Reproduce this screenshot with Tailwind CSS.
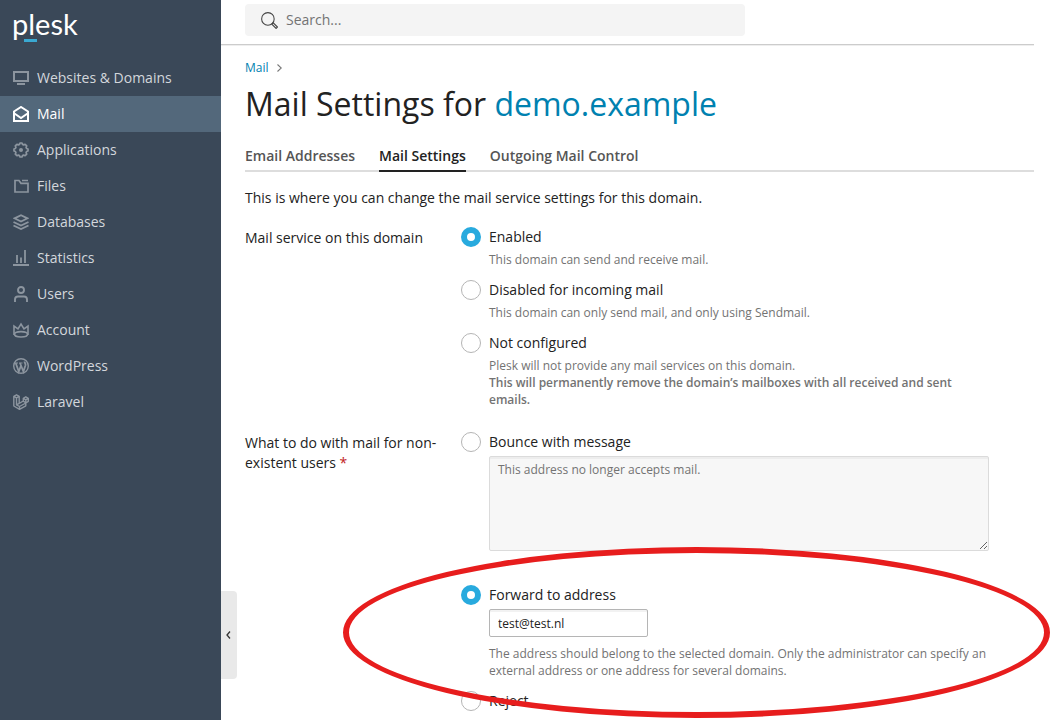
<!DOCTYPE html>
<html lang="en">
<head>
    <meta charset="UTF-8">
    <meta name="viewport" content="width=device-width, initial-scale=1.0">
    <title>Mail Settings for demo.example</title>
    <script src="https://cdn.jsdelivr.net/npm/@tailwindcss/browser@4"></script>
</head>
<body class="relative flex h-screen overflow-hidden bg-white font-['Open_Sans',sans-serif] text-sm leading-5 text-[#222]">
    <!-- Sidebar -->
    <aside class="w-[221px] shrink-0 bg-[#3a4858]">
        <a href="#" class="relative block h-[60px] pt-[6px] pl-3 font-['Lato',sans-serif] text-[29px] leading-9 font-normal text-white">plesk
            <span class="absolute top-[39px] left-6 h-[3px] w-[13px] bg-[#3aa9d2]"></span>
        </a>
        <nav class="font-medium text-[#d3d7dc]">
            <a href="#" class="flex h-9 items-center gap-2 pl-[13px]">
                <svg class="size-4 text-[#8c959f]" viewBox="0 0 16 16" fill="none" stroke="currentColor" stroke-width="2"><path d="M1 2h14v9H1zM4 14h8" /></svg>
                Websites &amp; Domains
            </a>
            <a href="#" class="flex h-9 items-center gap-2 bg-[#53687b] pl-[13px] text-white">
                <svg class="size-4" viewBox="0 0 16 16" fill="none" stroke="currentColor" stroke-width="2"><path d="M1 15V5.500L8 1l7 4.500V15zM1.500 7.500L8 12l6.500-4.500" /></svg>
                Mail
            </a>
            <a href="#" class="flex h-9 items-center gap-2 pl-[13px]">
                <svg class="size-4 text-[#8c959f]" viewBox="0 0 16 16" fill="none" stroke="currentColor" stroke-width="1.700" stroke-linejoin="round"><path d="M6.500 2.400L7 1h2l.5 1.400 1.200.5 1.400-.6 1.600 1.600-.6 1.400.5 1.200L15 7v2l-1.400.5-.5 1.200.6 1.400-1.600 1.600-1.400-.6-1.200.5L9 15H7l-.5-1.400-1.200-.5-1.400.6-1.600-1.600.6-1.400-.5-1.200L1 9V7l1.400-.5.5-1.200-.6-1.400 1.600-1.600 1.400.6z" /><circle cx="8" cy="8" r="2" fill="currentColor" stroke="none" /></svg>
                Applications
            </a>
            <a href="#" class="flex h-9 items-center gap-2 pl-[13px]">
                <svg class="size-4 text-[#8c959f]" viewBox="0 0 16 16" fill="none" stroke="currentColor" stroke-width="1.700"><path d="M2 2.500h4L8 5.300h7V14H2zM9 2.500h6" /></svg>
                Files
            </a>
            <a href="#" class="flex h-9 items-center gap-2 pl-[13px]">
                <svg class="size-4 text-[#8c959f]" viewBox="0 0 16 16" fill="none" stroke="currentColor" stroke-width="1.900"><path d="M1.500 4.300L8 1.200l6.500 3.100L8 7.500zM.5 8L8 11.500 15.500 8M.5 11.500L8 15l7.500-3.500" /></svg>
                Databases
            </a>
            <a href="#" class="flex h-9 items-center gap-2 pl-[13px]">
                <svg class="size-4 text-[#8c959f]" viewBox="0 0 16 16" fill="none" stroke="currentColor" stroke-width="1.800"><path d="M0 15h16M4 5v8M8 7.500V13M12 0v13" /></svg>
                Statistics
            </a>
            <a href="#" class="flex h-9 items-center gap-2 pl-[13px]">
                <svg class="size-4 text-[#8c959f]" viewBox="0 0 16 16" fill="none" stroke="currentColor" stroke-width="1.900"><circle cx="8" cy="4" r="3" /><path d="M2 16v-2.500q0-3 3-3h6q3 0 3 3V16" /></svg>
                Users
            </a>
            <a href="#" class="flex h-9 items-center gap-2 pl-[13px]">
                <svg class="size-4 text-[#8c959f]" viewBox="0 0 16 16" fill="none" stroke="currentColor" stroke-width="1.600"><path d="M1 13V4l4 2.800L8 2l3 4.800L15 4v9" /><ellipse cx="8" cy="12.300" rx="6.500" ry="2.700" /></svg>
                Account
            </a>
            <a href="#" class="flex h-9 items-center gap-2 pl-[13px]">
                <svg class="size-4 text-[#8c959f]" viewBox="0 0 16 16" fill="none" stroke="currentColor"><circle cx="8" cy="8" r="7.300" stroke-width="1.400" /><path stroke-width="1.800" d="M2.700 5l3.100 8.500L8.200 7M7 5l3.400 8.500 2-6c.6-2-.9-2.500-.9-4" /><path d="M2 5h3M6 5h3.500" /></svg>
                WordPress
            </a>
            <a href="#" class="flex h-9 items-center gap-2 pl-[13px]">
                <svg class="size-4 text-[#8c959f]" viewBox="0 0 16 16" fill="none" stroke="currentColor" stroke-width="1.400" stroke-linejoin="round"><path d="M.8 2.300L3.500.8l2.700 1.500v7L10.300 7V4.300L12.800 2.800l2.500 1.500v3L12.800 9v2.800L6.500 15.300.8 12zM.8 2.300l2.700 1.500 2.700-1.500M3.500 3.800v7l3 1.700 6.300-3.500M3.500 10.800l2.700-1.500M6.500 12.500v2.800M10.300 4.300l2.500 1.500 2.500-1.500M12.800 5.800V9L10.300 7" /></svg>
                Laravel
            </a>
        </nav>
    </aside>
    <button type="button" aria-label="Collapse sidebar" class="absolute top-[591px] left-[221px] flex h-[88px] w-4 items-center rounded-r bg-[#e9e9e9] pl-[5px]">
        <svg class="h-2 w-[5px]" viewBox="0 0 5 8" fill="none" stroke="#333" stroke-width="1.300"><path d="M4 .5L1 4l3 3.500" /></svg>
    </button>

    <div class="mr-[17px] min-w-0 flex-1">
        <header class="h-[45px] border-b border-[#ccc] px-6 pt-1 shadow-[0_1px_0_#eee]">
            <label class="flex h-8 max-w-[500px] items-center gap-2 rounded bg-[#f4f4f4] px-4">
                <svg class="size-[17px] shrink-0" viewBox="0 0 16 16" fill="none" stroke="#444" stroke-width="1"><circle cx="6.500" cy="6.500" r="5.900" /><path d="M10.200 11.500l1.300-1.300 4 4-1.300 1.300z" /></svg>
                <input type="search" placeholder="Search..." aria-label="Search" class="w-full bg-transparent outline-none placeholder:text-[#737373]">
            </label>
        </header>

        <main class="pt-[14px] pl-6">
            <div class="flex items-center gap-2 text-xs leading-[18px]">
                <a href="#" class="text-[#0081b0]">Mail</a>
                <svg class="h-2 w-[5px]" viewBox="0 0 5 8" fill="none" stroke="#777" stroke-width="1.100"><path d="M.5.500L4.300 4 .5 7.500" /></svg>
            </div>
            <h1 class="mt-[7px] text-[32px] leading-10">Mail Settings for <a href="#" class="text-[#0081b0]">demo.example</a></h1>

            <div class="mt-[22px] flex gap-6 border-b-2 border-[#ddd] font-semibold text-[#555]">
                <a href="#" class="-mb-[2px] pb-[6px]">Email Addresses</a>
                <a href="#" class="-mb-[2px] border-b-2 border-[#222] pb-1 text-[#222]">Mail Settings</a>
                <a href="#" class="-mb-[2px] pb-[6px]">Outgoing Mail Control</a>
            </div>

            <p class="mt-4">This is where you can change the mail service settings for this domain.</p>

            <form class="mt-[19px] flex flex-col gap-6">
                <fieldset class="flex" aria-labelledby="service">
                    <div id="service" class="w-[216px] shrink-0 pr-4 pt-px">Mail service on this domain</div>
                    <div class="flex max-w-[528px] flex-1 flex-col gap-3">
                        <div>
                            <label class="flex items-center gap-2"><input type="radio" name="service" checked class="size-5 appearance-none rounded-full border border-[#b5b5b5] bg-white checked:border-6 checked:border-[#28aade]">Enabled</label>
                            <p class="mt-1 pl-7 text-xs leading-[17px] text-[#737373]">This domain can send and receive mail.</p>
                        </div>
                        <div>
                            <label class="flex items-center gap-2"><input type="radio" name="service" class="size-5 appearance-none rounded-full border border-[#b5b5b5] bg-white checked:border-6 checked:border-[#28aade]">Disabled for incoming mail</label>
                            <p class="mt-1 pl-7 text-xs leading-[17px] text-[#737373]">This domain can only send mail, and only using Sendmail.</p>
                        </div>
                        <div>
                            <label class="flex items-center gap-2"><input type="radio" name="service" class="size-5 appearance-none rounded-full border border-[#b5b5b5] bg-white checked:border-6 checked:border-[#28aade]">Not configured</label>
                            <p class="mt-1 pl-7 text-xs leading-[17px] text-[#737373]">Plesk will not provide any mail services on this domain.<br><b class="font-semibold">This will permanently remove the domain’s mailboxes with all received and sent emails.</b></p>
                        </div>
                    </div>
                </fieldset>

                <fieldset class="flex" aria-labelledby="nonexist">
                    <div id="nonexist" class="w-[216px] shrink-0 pr-4 pt-px">What to do with mail for non-existent users <span class="text-[#c12222]">*</span></div>
                    <div class="flex max-w-[528px] flex-1 flex-col gap-3">
                        <div class="mb-[22px]">
                            <label class="flex items-center gap-2"><input type="radio" name="nonexist" class="size-5 appearance-none rounded-full border border-[#b5b5b5] bg-white checked:border-6 checked:border-[#28aade]">Bounce with message</label>
                            <div class="mt-1 pl-7">
                                <textarea disabled aria-label="Bounce message" class="block h-[95px] w-full resize rounded-xs border border-[#dbdbdb] bg-[#f7f7f7] px-2 py-1 text-xs leading-[18px] text-[#737373] shadow-[inset_0_2px_0_#ededed]">This address no longer accepts mail.</textarea>
                            </div>
                        </div>
                        <div>
                            <label class="flex items-center gap-2"><input type="radio" name="nonexist" checked class="size-5 appearance-none rounded-full border border-[#b5b5b5] bg-white checked:border-6 checked:border-[#28aade]">Forward to address</label>
                            <div class="mt-1 pl-7">
                                <input type="text" value="test@test.nl" aria-label="Forwarding address" class="block h-7 w-[159px] rounded-xs border border-[#b5b5b5] px-2 text-xs shadow-[inset_0_2px_0_#f2f2f2]">
                                <p class="mt-2 text-xs leading-[17px] text-[#737373]">The address should belong to the selected domain. Only the administrator can specify an external address or one address for several domains.</p>
                            </div>
                        </div>
                        <label class="flex items-center gap-2"><input type="radio" name="nonexist" class="size-5 appearance-none rounded-full border border-[#b5b5b5] bg-white checked:border-6 checked:border-[#28aade]">Reject</label>
                    </div>
                </fieldset>
            </form>
        </main>
    </div>

    <!-- Red marker around the forwarding option -->
    <div class="pointer-events-none absolute top-[547px] left-[343px] h-[171px] w-[707px] rounded-[50%] border-6 border-[#e71d1d]"></div>
</body>
</html>
